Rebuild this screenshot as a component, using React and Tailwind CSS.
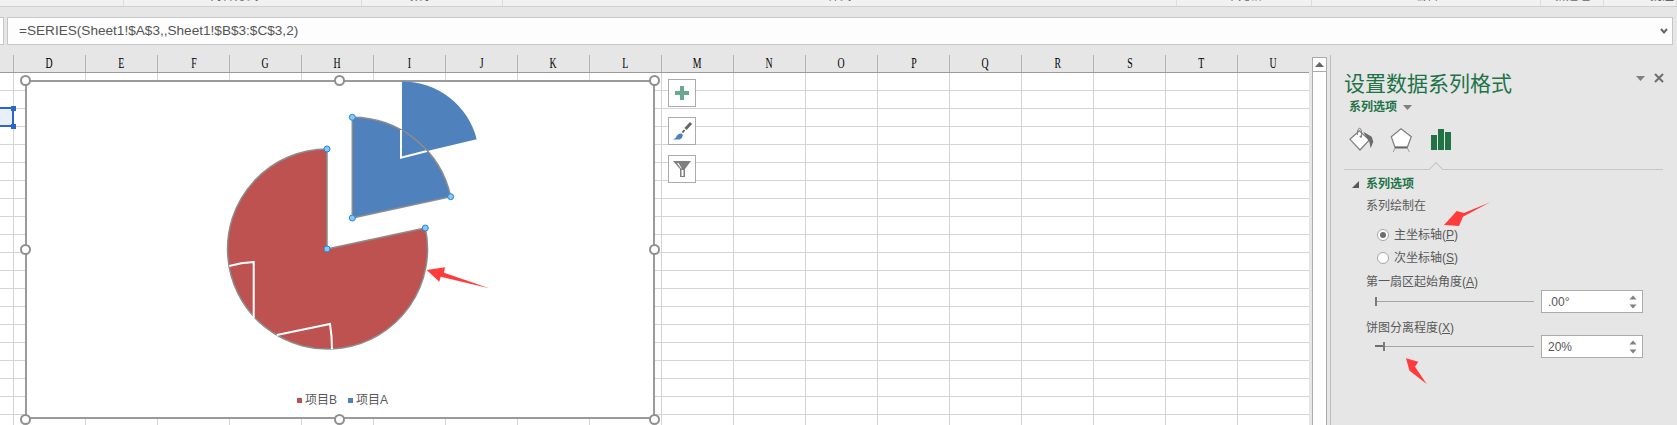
const cjk = "font-['Liberation_Sans','Noto_Sans_CJK_SC',sans-serif]";

const ribbonGroups = [
  { w: 124, label: '' },
  { w: 238, label: '对齐方式', cls: 'pr-[16px]' },
  { w: 141, label: '数字', cls: 'pr-[20px]' },
  { w: 674, label: '样式' },
  { w: 135, label: '单元格' },
  { w: 229, label: '编辑' },
  { w: 63, label: '新建组' },
  { w: 73, label: '批注', cls: 'pl-[44px]' },
];

const columns = ['D', 'E', 'F', 'G', 'H', 'I', 'J', 'K', 'L', 'M', 'N', 'O', 'P', 'Q', 'R', 'S', 'T', 'U'];
const rows = Array.from({ length: 20 }, (_, i) => i);

function Handle({ className }) {
  return <span className={`absolute h-[11px] w-[11px] rounded-full border-2 border-[#8f8f8f] bg-white ${className}`} />;
}

function PieDot({ x, y }) {
  return <circle cx={x} cy={y} r="3" fill="#8cc4f2" stroke="#1e8ae0" strokeWidth="1" />;
}

function PieChart() {
  return (
    <svg className="absolute left-[-2px] top-[-2px]" width="630" height="339" viewBox="25 80 630 339">
      <path d="M327 249 L327 149 A100 100 0 1 0 425.3 228 Z" fill="#bd5250" stroke="#8c8c8c" strokeWidth="1.5" />
      <path d="M229.3 266 Q241 262.5 253.7 262 L253.7 317.7" fill="none" stroke="#fff" strokeWidth="2" />
      <path d="M276.7 335 L330 324 Q332 336 332 349" fill="none" stroke="#fff" strokeWidth="2" />
      <path d="M402 157 L402 81.5 A76.6 76.6 0 0 1 476.7 139.3 Z" fill="#4f81bd" />
      <path d="M352.3 218 L352.3 117.3 A100.7 100.7 0 0 1 450.7 196.7 Z" fill="#4f81bd" stroke="#8c8c8c" strokeWidth="1.5" />
      <path d="M402 157 L402 130 L427 151 Z" fill="#4f81bd" />
      <path d="M401 130 L401 157.7 L427 151" fill="none" stroke="#fff" strokeWidth="2" />
      <path d="M402 130 A100.7 100.7 0 0 1 427 151" fill="none" stroke="#8c8c8c" strokeWidth="1" />
      <PieDot x={327} y={149} />
      <PieDot x={327} y={249} />
      <PieDot x={425.3} y={228} />
      <PieDot x={352.3} y={117.3} />
      <PieDot x={352.3} y={218} />
      <PieDot x={450.7} y={196.7} />
    </svg>
  );
}

function ChartButton({ children }) {
  return <div className="h-[28px] w-[28px] border border-[#ababab] bg-white">{children}</div>;
}

function PaintIcon() {
  return (
    <svg width="28" height="26" viewBox="0 0 28 26">
      <path d="M2 12.3 L11.3 3.7 L21.3 13 L12 23 Z" fill="#fff" stroke="#7f7f7f" strokeWidth="1.2" />
      <path d="M9.3 8 Q9.5 1.3 11.5 1.3 Q14 1.3 13.6 9" fill="none" stroke="#7f7f7f" strokeWidth="1" />
      <path d="M15.3 4.7 L23.7 9.7 L25.3 14.7 L22.7 21.3 L21.3 14.7 L17 8 Z" fill="#6b6b6b" />
      <circle cx="12.8" cy="9.6" r="1.2" fill="#7f7f7f" />
    </svg>
  );
}

function PentagonIcon() {
  return (
    <svg width="28" height="26" viewBox="0 0 28 26">
      <path d="M13 1.7 L23.3 9.7 L19.3 20.3 L7 20.3 L3.3 9.7 Z" fill="#fff" stroke="#7f7f7f" strokeWidth="1.2" />
      <path d="M7 20.5 L19.3 20.5" stroke="#666" strokeWidth="2" />
      <path d="M7 21 L5.3 25 M19.3 21 L21.3 25" stroke="#a0a0a0" strokeWidth="1" />
    </svg>
  );
}

function BarsIcon() {
  return (
    <svg width="20" height="22" viewBox="0 0 20 22">
      <rect x="0" y="6" width="6" height="15" fill="#217346" />
      <rect x="7" y="0" width="6" height="21" fill="#217346" />
      <rect x="14" y="3" width="6" height="18" fill="#217346" />
    </svg>
  );
}

function Spinner() {
  return (
    <svg width="8" height="16" viewBox="0 0 8 16" className="shrink-0">
      <path d="M0.5 5.5 L4 1.5 L7.5 5.5 Z" fill="#7f7f7f" />
      <path d="M0.5 10.5 L4 14.5 L7.5 10.5 Z" fill="#7f7f7f" />
    </svg>
  );
}

function Radio({ checked, children }) {
  return (
    <div className="flex h-4 items-center pl-[46px]">
      <span className="flex h-[12px] w-[12px] items-center justify-center rounded-full border border-[#a6a6a6] bg-white">
        {checked && <span className="h-[6px] w-[6px] rounded-full bg-[#6e6e6e]" />}
      </span>
      <span className="ml-[5px]">{children}</span>
    </div>
  );
}

function SliderRow({ value, className, filled }) {
  return (
    <div className={`flex items-center pl-[44px] ${className}`}>
      <div className="relative h-px w-[159px] bg-[#a6a6a6]">
        {filled && <span className="absolute left-0 top-[-1px] h-[2px] w-[8px] bg-[#6e6e6e]" />}
        <span className={`absolute top-[-4px] h-[9px] w-[2px] bg-[#7a7a7a] ${filled ? 'left-[8px]' : 'left-0'}`} />
      </div>
      <div className="ml-[7px] flex h-full w-[102px] items-center justify-between border border-[#ababab] bg-white pl-[6px] pr-[5px] font-['Liberation_Sans',sans-serif] text-[12px] text-[#555]">
        {value}
        <Spinner />
      </div>
    </div>
  );
}

export default function App() {
  return (
    <div className={`relative h-[425px] w-full overflow-hidden bg-[#e6e6e6] ${cjk}`}>
      {/* ribbon, only the bottom of it is in the crop */}
      <div className="flex h-[7px] overflow-hidden border-b border-[#d0d0d0] bg-[#f1f1f1]">
        {ribbonGroups.map((g, i) => (
          <div
            key={i}
            style={{ width: g.w }}
            className={`h-[6px] shrink-0 border-r border-[#dcdcdc] text-center text-[12px] leading-[16px] text-[#666] ${g.cls || ''}`}
          >
            <div className="-mt-[12px]">{g.label}</div>
          </div>
        ))}
      </div>

      {/* formula bar */}
      <div className="flex h-[48px] items-start pt-[10px]">
        <div className="h-[28px] w-[4px] border border-l-0 border-[#c6c6c6] bg-white" />
        <div className="ml-[3px] flex h-[28px] w-[1666px] items-center justify-between border border-[#c6c6c6] bg-[#fdfdfd] pl-[11px] pr-[4px] font-['Liberation_Sans',sans-serif] text-[13.6px] text-[#555]">
          =SERIES(Sheet1!$A$3,,Sheet1!$B$3:$C$3,2)
          <svg width="8" height="7" viewBox="0 0 8 7">
            <path d="M1 1 L4 4.5 L7 1" fill="none" stroke="#666" strokeWidth="2" />
          </svg>
        </div>
      </div>

      <div className="flex h-[370px]">
        {/* sheet */}
        <div className="relative w-[1309px] shrink-0 overflow-hidden bg-white">
          <div className="flex h-[18px] border-b border-[#9b9b9b] bg-[#e6e6e6]">
            <div className="h-full w-[14px] shrink-0 border-r border-[#b4b4b4]" />
            {columns.map((c) => (
              <div
                key={c}
                className="flex h-full w-[72px] shrink-0 items-center justify-center border-r border-[#b4b4b4] font-['Liberation_Serif',serif] text-[14px] text-black"
              >
                <span className="scale-x-[0.7]">{c}</span>
              </div>
            ))}
          </div>
          {rows.map((r) => (
            <div key={r} className="flex h-[18px] border-b border-[#d4d4d4]">
              <div className="h-full w-[14px] shrink-0 border-r border-[#d4d4d4]" />
              {columns.map((c) => (
                <div key={c} className="h-full w-[72px] shrink-0 border-r border-[#d4d4d4]" />
              ))}
            </div>
          ))}

          {/* selected cell */}
          <div className="absolute left-[-3px] top-[52px] h-[20px] w-[17px] border-2 border-[#2b66c8] bg-[#e8eff9]">
            <span className="absolute right-[-4px] top-[-3px] h-[5px] w-[5px] bg-[#2b66c8]" />
            <span className="absolute bottom-[-4px] right-[-4px] h-[5px] w-[5px] bg-[#2b66c8]" />
          </div>

          {/* chart */}
          <div className="absolute left-[25px] top-[25px] h-[339px] w-[630px] border-2 border-[#9a9a9a] bg-white">
            <PieChart />
            <div className="absolute left-[270px] top-[310px] flex items-center text-[12px] leading-[16px] text-[#595959]">
              <span className="h-[5px] w-[5px] bg-[#bd5250]" />
              <span className="ml-[3px]">项目B</span>
              <span className="ml-[11px] h-[5px] w-[5px] bg-[#4f81bd]" />
              <span className="ml-[3px]">项目A</span>
            </div>
          </div>
          <Handle className="left-[20px] top-[20px]" />
          <Handle className="left-[334px] top-[20px]" />
          <Handle className="left-[649px] top-[20px]" />
          <Handle className="left-[20px] top-[189px]" />
          <Handle className="left-[649px] top-[189px]" />
          <Handle className="left-[20px] top-[359px]" />
          <Handle className="left-[334px] top-[359px]" />
          <Handle className="left-[649px] top-[359px]" />

          {/* chart side buttons */}
          <div className="absolute left-[668px] top-[24px] flex flex-col gap-[10px]">
            <ChartButton>
              <svg width="26" height="26" viewBox="0 0 26 26">
                <path d="M13 6 L13 20 M6 13 L20 13" stroke="#6aa98f" strokeWidth="4" />
              </svg>
            </ChartButton>
            <ChartButton>
              <svg width="26" height="26" viewBox="0 0 26 26">
                <path d="M22 5 L16.5 11" stroke="#666" strokeWidth="3" />
                <path d="M15.5 12 L13.5 14.5" stroke="#666" strokeWidth="2" />
                <path d="M4 21.5 Q7 20.5 8 17.5 Q10 15 12.5 15.5 L14 17 Q13.5 20 11 21.5 Z" fill="#4f81bd" />
              </svg>
            </ChartButton>
            <ChartButton>
              <svg width="26" height="26" viewBox="0 0 26 26">
                <path d="M4 5 L22 5 L16 13 L16 21 L11 21 L11 13 Z" fill="#7f7f7f" />
                <path d="M12.5 14 L12.5 20 L14.5 20 L14.5 14 Z M8 7 L12 12.5 L12.8 12.5 L9.5 7 Z" fill="#fff" />
              </svg>
            </ChartButton>
          </div>
        </div>

        {/* scrollbar */}
        <div className="ml-[3px] mt-[2px] flex w-[15px] shrink-0 flex-col border-x border-[#ababab] bg-white">
          <div className="flex h-[15px] items-center justify-center border-y border-[#ababab]">
            <svg width="9" height="5" viewBox="0 0 9 5">
              <path d="M0 5 L4.5 0 L9 5 Z" fill="#666" />
            </svg>
          </div>
        </div>

        {/* format pane */}
        <div className="ml-[3px] flex-1 border-l border-[#bdbdbd] text-[12px] leading-[16px] text-[#595959]">
          <div className="relative pl-[13px] pt-[13px]">
            <div className="h-[31px] text-[21px] leading-[32px] text-[#217346]">设置数据系列格式</div>
            <svg className="absolute left-[305px] top-[21px]" width="9" height="5" viewBox="0 0 9 5">
              <path d="M0 0 L9 0 L4.5 5 Z" fill="#7f7f7f" />
            </svg>
            <svg className="absolute left-[323px] top-[18px]" width="10" height="10" viewBox="0 0 10 10">
              <path d="M1 1 L9 9 M9 1 L1 9" stroke="#6e6e6e" strokeWidth="2" />
            </svg>
          </div>
          <div className="flex h-4 items-center pl-[18px] font-bold text-[#217346]">
            系列选项
            <svg className="ml-[6px]" width="9" height="5" viewBox="0 0 9 5">
              <path d="M0 0 L9 0 L4.5 5 Z" fill="#7f7f7f" />
            </svg>
          </div>
          <div className="ml-[17px] mt-[12px] flex h-[26px] items-start">
            <PaintIcon />
            <div className="ml-[12px]">
              <PentagonIcon />
            </div>
            <div className="ml-[15px] mt-[2px]">
              <BarsIcon />
            </div>
          </div>
          <div className="relative ml-[13px] mt-[16px] h-px w-[319px] bg-[#c6c6c6]">
            <span className="absolute left-[87px] top-[-5px] h-[10px] w-[10px] rotate-45 border-l border-t border-[#c6c6c6] bg-[#e6e6e6]" />
          </div>
          <div className="mt-[6px] flex h-4 items-center pl-[21px] font-bold text-[#217346]">
            <svg width="7" height="7" viewBox="0 0 7 7">
              <path d="M7 0 L7 7 L0 7 Z" fill="#595959" />
            </svg>
            <span className="ml-[7px]">系列选项</span>
          </div>
          <div className="mt-[6px] h-4 pl-[35px]">系列绘制在</div>
          <div className="mt-[13px]">
            <Radio checked>
              主坐标轴(<u>P</u>)
            </Radio>
          </div>
          <div className="mt-[7px]">
            <Radio>
              次坐标轴(<u>S</u>)
            </Radio>
          </div>
          <div className="mt-2 h-4 pl-[35px]">
            第一扇区起始角度(<u>A</u>)
          </div>
          <SliderRow value=".00°" className="h-[23px]" />
          <div className="mt-[7px] h-4 pl-[35px]">
            饼图分离程度(<u>X</u>)
          </div>
          <SliderRow value="20%" filled className="-mt-px h-[23px]" />
        </div>
      </div>

      {/* red annotation arrows */}
      <svg className="pointer-events-none absolute inset-0" width="1677" height="425" viewBox="0 0 1677 425">
        <path d="M426.7 270 L445 267.3 L444 272.7 L489.3 288.3 L440.7 276.7 L439.3 281.7 Z" fill="#ff3b3b" />
        <path d="M1444 225 L1456.7 211 L1464 213 L1490 202.3 L1463 216.7 L1459 226 Z" fill="#ff3b3b" />
        <path d="M1406 358.3 L1418.3 361.7 L1415 366.7 L1426.7 384 L1409.5 370.7 Z" fill="#ff3b3b" />
      </svg>
    </div>
  );
}
